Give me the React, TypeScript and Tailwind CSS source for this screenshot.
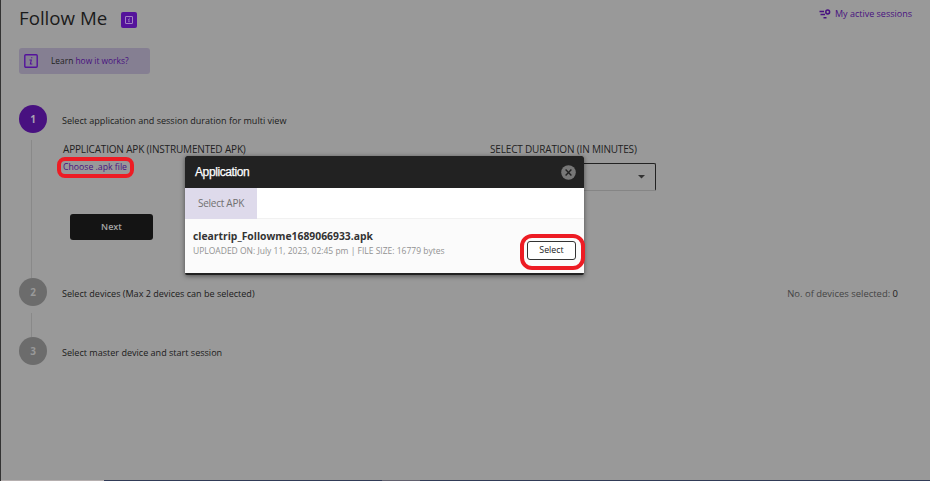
import type { ReactNode } from "react";

function InfoIcon({ className }: { className: string }) {
  return (
    <svg viewBox="0 0 14 14" className={className} fill="none" stroke="currentColor">
      <rect x="0.8" y="0.8" width="12.4" height="12.4" rx="1" strokeWidth="1.4" />
      <path d="M5.5 6H7.3L6.4 10H8.3" strokeWidth="1.1" />
      <path d="M7.1 3.2H8.3V4.3H7.1Z" fill="currentColor" stroke="none" />
    </svg>
  );
}

function Step({ number, active, title, height, aside, children }: {
  number: number;
  active?: boolean;
  title: string;
  height: string;
  aside?: ReactNode;
  children?: ReactNode;
}) {
  return (
    <li className={`flex ${height}`}>
      <div className="flex w-[43px] shrink-0 flex-col items-start">
        <span className={`flex size-7 shrink-0 items-center justify-center rounded-full text-[10px] font-bold ${active ? "bg-[#481180] text-[#a9a2b2]" : "bg-[#6c6c6c] text-[#999999]"}`}>
          {number}
        </span>
        {number < 3 && <span className="ml-3 mt-[7px] w-px grow bg-[#898989]" />}
      </div>
      <div className="min-w-0 grow">
        <div className="flex h-[31px] items-center justify-between">
          <h2 className="whitespace-nowrap text-[9.05px] font-medium text-[#1b1b1b]">{title}</h2>
          {aside}
        </div>
        {children}
      </div>
    </li>
  );
}

function Modal() {
  return (
    <section className="absolute left-[184px] top-[156px] flex h-[119px] w-[399px] flex-col overflow-hidden rounded-[2px] border-b-2 border-[#222222] bg-[#fbfbfb] shadow-[0_1px_5px_rgba(0,0,0,0.5)]">
      <header className="flex h-8 shrink-0 items-center justify-between bg-[#222222] pl-[10px] pr-[8px]">
        <h2 className="font-['Liberation_Sans',sans-serif] text-[12px] tracking-[-0.4px] text-white [-webkit-text-stroke:0.25px_white]">Application</h2>
        <svg viewBox="0 0 15 15" className="size-[15px]">
          <circle cx="7.5" cy="7.5" r="7.3" fill="#777777" />
          <path d="M4.6 4.6L10.4 10.4M10.4 4.6L4.6 10.4" stroke="#222222" strokeWidth="1.4" />
        </svg>
      </header>
      <div className="flex h-[31px] shrink-0 border-b border-[#f1f1f1] bg-white">
        <div className="-mb-px flex w-[72px] items-center justify-center bg-[#dedaeb] text-[10px] tracking-[-0.25px] text-[#707070]">Select APK</div>
      </div>
      <div className="flex grow items-start justify-between pl-2 pr-[8px]">
        <div className="pt-[10px]">
          <p className="text-[10.35px] font-bold leading-[14px] text-[#333333]">cleartrip_Followme1689066933.apk</p>
          <p className="whitespace-nowrap text-[8.5px] leading-[15px] text-[#929292]">UPLOADED ON: July 11, 2023, 02:45 pm | FILE SIZE: 16779 bytes</p>
        </div>
        <button className="mt-[22px] flex h-[19px] w-[49px] items-center justify-center rounded-[3px] border border-[#333333] bg-white text-[8.8px] font-medium text-[#222222]">Select</button>
      </div>
    </section>
  );
}

export default function App() {
  return (
    <main className="relative flex h-[481px] w-[930px] flex-col overflow-hidden border-l border-[#333333] bg-[#999999] font-['Open_Sans',sans-serif]">
      <header className="flex h-12 shrink-0 items-start justify-between pl-[18px] pr-[18px]">
        <div className="flex h-[37px] items-center">
          <h1 className="text-[18.7px] text-[#1b1b1b]">Follow Me</h1>
          <span className="ml-[14px] mt-[2px] flex size-4 items-center justify-center rounded-[2px] bg-[#54129b] text-[#bba4d0]">
            <InfoIcon className="size-2" />
          </span>
        </div>
        <a className="flex h-7 items-center gap-1 text-[9px] text-[#481180]">
          <svg viewBox="0 0 12 10" className="h-[10px] w-3" fill="none" stroke="currentColor" strokeWidth="1.5">
            <path d="M0.5 2.5H5M1.5 5.5H6M4.5 8.7H7.5" />
            <circle cx="8.7" cy="3" r="1.9" />
          </svg>
          My active sessions
        </a>
      </header>
      <div className="ml-[18px] flex h-[26px] w-[131px] shrink-0 items-center rounded-[3px] bg-[#857f92] pl-[5px] text-[8.4px]">
        <InfoIcon className="size-[14px] text-[#54129b]" />
        <p className="ml-[13px] whitespace-nowrap font-medium text-[#481180]"><span className="text-[#222222]">Learn</span> how it works?</p>
      </div>
      <ol className="mt-[31px] flex flex-col pl-[18px] pr-8">
        <Step number={1} active title="Select application and session duration for multi view" height="h-[173px]">
          <div className="flex pl-px">
            <div className="w-[427px]">
              <h3 className="mt-[6px] text-[10px] leading-[15px] tracking-[-0.17px] text-[#222222]">APPLICATION APK (INSTRUMENTED APK)</h3>
              <p className="mt-1 text-[8.7px] leading-[13px] text-[#481180]">Choose .apk file</p>
              <button className="ml-[7px] mt-[40px] flex h-[26px] w-[83px] items-center justify-center rounded-[3px] bg-[#141414] text-[9px] font-semibold text-[#a5a5a5]">Next</button>
            </div>
            <div className="w-[166px]">
              <h3 className="mt-[6px] text-[10px] leading-[15px] tracking-[-0.17px] text-[#222222]">SELECT DURATION (IN MINUTES)</h3>
              <div className="mt-[6px] flex h-[28px] items-center justify-end rounded-[2px] border border-[#222222] border-b-[#858585] pr-[10px]">
                <svg viewBox="0 0 7 4" className="h-1 w-[7px]"><path d="M0 0H7L3.5 3.5Z" fill="#333333" /></svg>
              </div>
            </div>
          </div>
        </Step>
        <Step number={2} title="Select devices (Max 2 devices can be selected)" height="h-[59px]" aside={<p className="pt-px text-[9.45px] text-[#444444]">No. of devices selected: <span className="text-[#222222]">0</span></p>} />
        <Step number={3} title="Select master device and start session" height="h-[31px]" />
      </ol>
      <footer className="mt-auto flex h-px shrink-0 bg-[#313b57]">
        <span className="w-[103px] bg-[#b5afaf]" />
        <span className="ml-[278px] w-[38px] bg-[#62616f]" />
      </footer>
      <Modal />
      <span className="absolute left-[56px] top-[157px] h-[21px] w-[77px] rounded-[8px] border-4 border-[#ed1c24]" />
      <span className="absolute left-[519px] top-[234px] h-9 w-[65px] rounded-[12px] border-4 border-[#ed1c24]" />
    </main>
  );
}
